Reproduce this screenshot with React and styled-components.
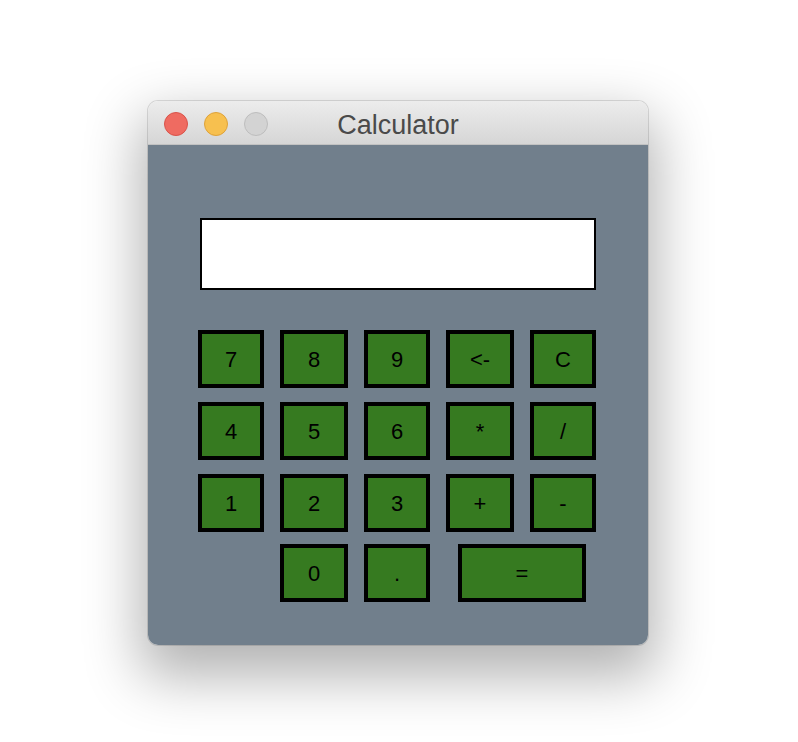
import styled, { createGlobalStyle } from "styled-components";

const GlobalStyle = createGlobalStyle`
  html, body {
    margin: 0;
    padding: 0;
    background: #ffffff;
    font-family: "Liberation Sans", Arial, sans-serif;
  }
`;

const rows = [
  ["7", "8", "9", "<-", "C"],
  ["4", "5", "6", "*", "/"],
  ["1", "2", "3", "+", "-"],
];

const App = () => {
  return (
    <Page>
      <GlobalStyle />
      <Window>
        <TitleBar>
          <Lights>
            <Light color="#ef6b61" edge="#d9534a" />
            <Light color="#f7c04f" edge="#dea23a" />
            <Light color="#d3d3d3" edge="#bdbdbd" />
          </Lights>
          <Title>Calculator</Title>
        </TitleBar>
        <Body>
          <Display />
          <Keypad>
            {rows.map((row, i) => (
              <KeyRow key={i}>
                {row.map((k) => (
                  <Key key={k}>{k}</Key>
                ))}
              </KeyRow>
            ))}
            <LastRow>
              <Key width="68px">0</Key>
              <Key>.</Key>
              <Key width="128px" $gapBefore>=</Key>
            </LastRow>
          </Keypad>
        </Body>
      </Window>
    </Page>
  );
};

export default App;

const Page = styled.div`
  width: 798px;
  height: 742px;
  padding-top: 101px;
  padding-left: 148px;
  box-sizing: border-box;
`;

const Window = styled.div`
  width: 500px;
  border-radius: 10px;
  overflow: hidden;
  box-shadow: 0 24px 56px 8px rgba(0, 0, 0, 0.3), 0 0 0 1px rgba(0, 0, 0, 0.12);
`;

const TitleBar = styled.div`
  position: relative;
  height: 44px;
  box-sizing: border-box;
  background: linear-gradient(#ececec, #d6d6d6);
  border-bottom: 1px solid #c2c2c2;
  display: flex;
  align-items: center;
  justify-content: center;
`;

const Lights = styled.div`
  position: absolute;
  left: 16px;
  top: 11px;
  display: flex;
  gap: 16px;
`;

const Light = styled.span`
  width: 22px;
  height: 22px;
  border-radius: 50%;
  background: ${(p) => p.color};
  border: 1px solid ${(p) => p.edge};
`;

const Title = styled.span`
  font-family: "Liberation Sans", Arial, sans-serif;
  font-size: 27px;
  color: #4a4a4a;
  margin-top: 5px;
`;

const Body = styled.div`
  height: 500px;
  background: #717f8c;
  padding: 73px 0 0 50px;
  box-sizing: border-box;
`;

const Display = styled.div`
  width: 396px;
  height: 72px;
  margin-left: 2px;
  box-sizing: border-box;
  background: #ffffff;
  border: 2px solid #000000;
`;

const Keypad = styled.div`
  margin-top: 40px;
  display: flex;
  flex-direction: column;
  gap: 14px;
`;

const KeyRow = styled.div`
  display: grid;
  grid-template-columns: 66px 68px 66px 68px 66px;
  column-gap: 16px;
`;

const LastRow = styled.div`
  display: flex;
  margin-top: -2px;
  padding-left: 82px;
  gap: 16px;
`;

const Key = styled.div`
  width: ${(p) => p.width || "auto"};
  min-width: 66px;
  height: 58px;
  margin-left: ${(p) => (p.$gapBefore ? "12px" : "0")};
  padding-top: 2px;
  box-sizing: border-box;
  background: #367a20;
  border: 4px solid #000000;
  display: flex;
  align-items: center;
  justify-content: center;
  font-family: "Liberation Sans", Arial, sans-serif;
  font-size: 22px;
  color: #000000;
`;
